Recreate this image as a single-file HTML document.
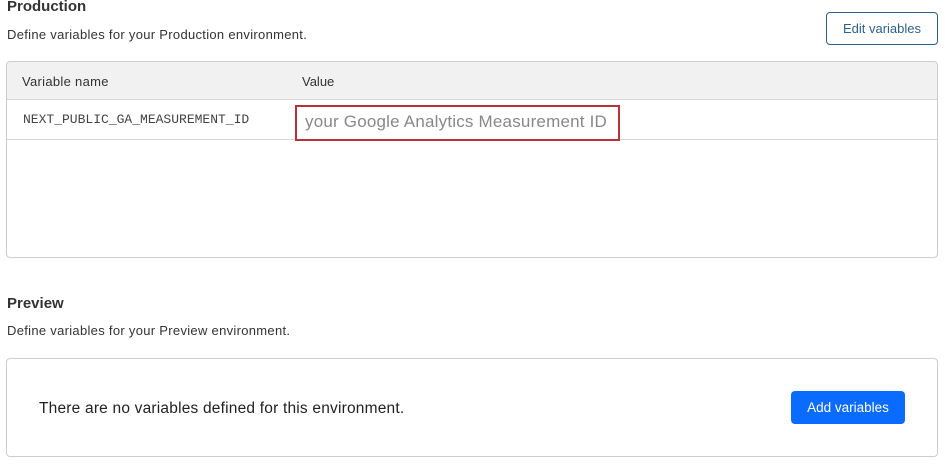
<!DOCTYPE html>
<html><head><style>
*{margin:0;padding:0;box-sizing:border-box}
body{width:945px;height:465px;background:#fff;font-family:"Liberation Sans",sans-serif;color:#222;position:relative;overflow:hidden}
.a{position:absolute}
h2{font-size:15px;font-weight:bold;color:#333}
.sub{font-size:13px;letter-spacing:.3px;color:#333}
</style></head><body>
<h2 class="a" style="left:7px;top:-2px">Production</h2>
<div class="a sub" style="left:7px;top:27px">Define variables for your Production environment.</div>
<div class="a" style="left:826px;top:12px;width:112px;height:33px;border:1px solid #2f5f8a;border-radius:4px;color:#2f5f8a;font-size:13px;text-align:center;line-height:31px">Edit variables</div>
<div class="a" style="left:6px;top:61px;width:932px;height:197px;border:1px solid #ccc;border-radius:4px;overflow:hidden">
 <div style="height:38px;background:#f1f1f1;border-bottom:1px solid #d6d6d6;position:relative;font-size:13px;color:#333">
  <span class="a" style="left:15px;top:12px;letter-spacing:.3px">Variable name</span>
  <span class="a" style="left:295px;top:12px">Value</span>
 </div>
 <div style="height:40px;border-bottom:1px solid #d6d6d6;position:relative">
  <span class="a" style="left:16px;top:12px;font-family:'Liberation Mono',monospace;font-size:13px;color:#444">NEXT_PUBLIC_GA_MEASUREMENT_ID</span>
 </div>
</div>
<div class="a" style="left:295px;top:105px;width:325px;height:36px;border:2px solid #b7323b"></div>
<div class="a" style="left:305px;top:112px;font-size:17px;color:#888;letter-spacing:.2px">your Google Analytics Measurement ID</div>
<h2 class="a" style="left:7px;top:295px">Preview</h2>
<div class="a sub" style="left:7px;top:323px">Define variables for your Preview environment.</div>
<div class="a" style="left:6px;top:358px;width:932px;height:99px;border:1px solid #ccc;border-radius:4px"></div>
<div class="a" style="left:39px;top:400px;font-size:15.5px;letter-spacing:.2px;color:#222">There are no variables defined for this environment.</div>
<div class="a" style="left:791px;top:391px;width:114px;height:33px;background:#0a6cff;border-radius:4px;color:#fff;font-size:13.5px;text-align:center;line-height:33px">Add variables</div>
</body></html>
